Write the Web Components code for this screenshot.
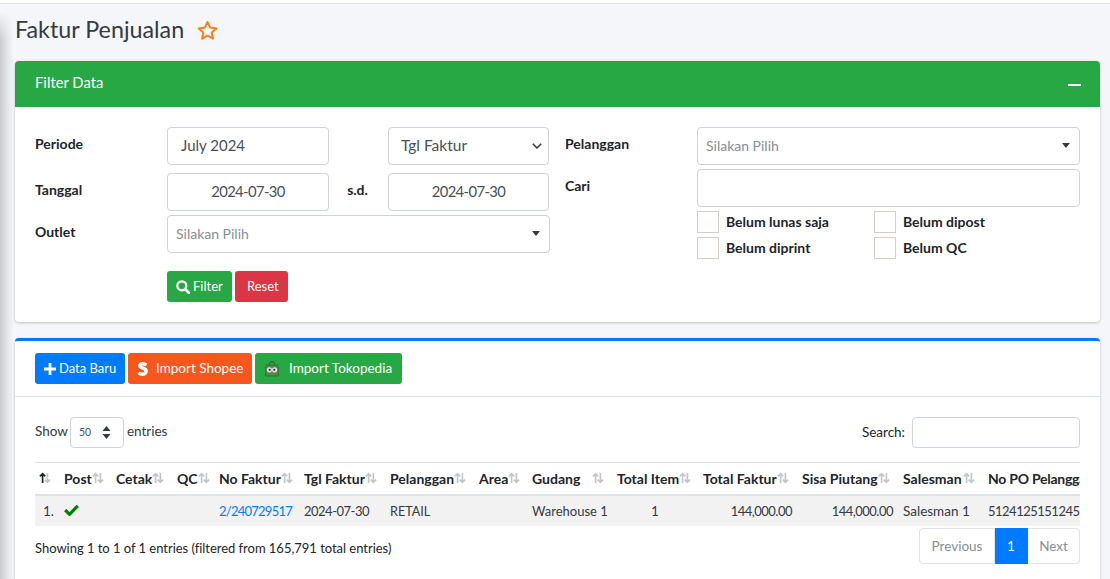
<!DOCTYPE html>
<html lang="id">
<head>
<meta charset="utf-8">
<title>Faktur Penjualan</title>
<style>
  html, body { height: 100%; }
  body {
    margin: 0;
    overflow: hidden;
    background:
      linear-gradient(180deg, #f4f6f9 12px, rgba(244,246,249,0) 40px),
      linear-gradient(90deg, #c8cacd 0, #d6d8dc 4px, #e8eaee 9px, #f4f6f9 14px) #f4f6f9;
    color: #212529;
    font: 13.5px/21px "Lato", "Noto Sans", sans-serif;
  }
</style>
</head>
<body>
<template id="tpl-page">
  <style>
    :host { display: block; padding: 0 10px 0 15px; }
    .top { height: 3px; background: #fff; border-bottom: 1px solid #dee2e6; margin: 0 -10px 0 -15px; }
    h1 { display: flex; align-items: center; gap: 13px; box-sizing: border-box; margin: 0; height: 57px; padding-bottom: 6px; font-size: 23.3px; font-weight: 400; color: #343a40; }
    svg { width: 21px; height: 21px; display: block; margin-top: 2px; }
    .stack { display: flex; flex-direction: column; gap: 16px; }
  </style>
  <div class="top"></div>
  <h1><slot name="title"></slot>
    <svg viewBox="0 0 24 24" fill="none" stroke="#fd7e14" stroke-width="2.3" stroke-linejoin="round"><path d="M12 2.2l3 6.5 7 .9-5.1 4.8 1.3 7-6.2-3.5-6.2 3.5 1.3-7L2 9.6l7-.9z"/></svg>
  </h1>
  <div class="stack"><slot></slot></div>
</template>

<template id="tpl-filter-card">
  <style>
    :host { display: block; background: #fff; border-radius: 4px; box-shadow: 0 0 1px rgba(0,0,0,.125), 0 1px 3px rgba(0,0,0,.2); }
    header { display: flex; align-items: center; justify-content: space-between; box-sizing: border-box; height: 46px; padding: 0 19px 4px 20px; background: #28a745; color: #fff; font-size: 14.8px; border-radius: 4px 4px 0 0; }
    i { display: block; width: 13px; height: 2.4px; background: #fff; margin-top: 6px; }
    .body { display: grid; grid-template-columns: 515px 515px; column-gap: 15px; padding: 20px; height: 175px; }
  </style>
  <header><slot name="title"></slot><i></i></header>
  <div class="body"><slot></slot></div>
</template>

<template id="tpl-form-field">
  <style>
    :host { display: block; }
    .row { display: grid; grid-template-columns: 132px 1fr; }
    .lbl { font-size: 14px; font-weight: 700; padding-top: 6px; color: #212529; }
  </style>
  <div class="row"><div class="lbl"><slot name="label"></slot></div><div><slot></slot></div></div>
</template>

<template id="tpl-text-box">
  <style>
    :host { display: block; box-sizing: border-box; height: 38px; border: 1px solid #ced4da; border-radius: 4px; background: #fff; color: #495057; font-size: 15px; line-height: 34px; padding: 0 13px; }
    :host([center]) { text-align: center; padding: 0; font-size: 14.8px; letter-spacing: -.6px; }
  </style>
  <slot></slot>
</template>

<template id="tpl-native-select">
  <style>
    :host { display: flex; align-items: center; justify-content: space-between; box-sizing: border-box; height: 38px; border: 1px solid #ced4da; border-radius: 4px; background: #fff; color: #495057; font-size: 15.5px; padding: 0 6px 2px 12px; }
    svg { width: 10px; height: 6px; margin-top: 2px; }
  </style>
  <slot></slot>
  <svg viewBox="0 0 10 6" fill="none" stroke="#343a40" stroke-width="1.5"><path d="M.8.8L5 5l4.2-4.2"/></svg>
</template>

<template id="tpl-select-two">
  <style>
    :host { display: flex; align-items: center; justify-content: space-between; box-sizing: border-box; height: 38px; border: 1px solid #ced4da; border-radius: 4px; background: #fff; color: #868e96; font-size: 14px; padding: 0 9px 1px 8px; }
    i { width: 0; height: 0; border: 4px solid transparent; border-top: 5px solid #343a40; border-bottom: 0; }
  </style>
  <slot></slot><i></i>
</template>

<template id="tpl-check-item">
  <style>
    :host { display: flex; align-items: center; gap: 7px; font-size: 14px; font-weight: 700; height: 22px; }
    i { box-sizing: border-box; width: 22px; height: 22px; border: 1px solid #d3cfc8; background: #fff; }
    span { display: block; margin-top: -2px; }
  </style>
  <i></i><span><slot></slot></span>
</template>

<template id="tpl-ui-button">
  <style>
    :host { display: inline-flex; align-items: center; box-sizing: border-box; height: 31px; padding: 0 0 0 9px; border-radius: 3px; color: #fff; font-size: 13.5px; white-space: nowrap; background: var(--bg, #007bff); }
    ::slotted(svg) { display: block; flex: none; }
  </style>
  <slot></slot>
</template>

<template id="tpl-list-card">
  <style>
    :host { display: block; background: #fff; border-top: 3px solid #007bff; border-radius: 4px 4px 0 0; box-shadow: 0 0 1px rgba(0,0,0,.125), 0 1px 3px rgba(0,0,0,.2); }
    .tools { display: flex; gap: 3px; padding: 12px 20px 12px; border-bottom: 1px solid #dee2e6; }
    .body { padding: 20px 20px 20px; }
  </style>
  <div class="tools"><slot name="tools"></slot></div>
  <div class="body"><slot></slot></div>
</template>

<template id="tpl-data-table">
  <style>
    :host { display: block; }
    .bar { display: flex; justify-content: space-between; align-items: center; height: 31px; }
    .len, .srch { display: flex; align-items: center; }
    .len { color: #343a40; }
    .len b { font-weight: 400; margin-top: -2px; }
    .len span.sel { display: flex; align-items: center; justify-content: space-between; box-sizing: border-box; width: 54px; height: 31px; margin: 0 3px 0 2px; padding: 0 12px 0 8px; border: 1px solid #ced4da; border-radius: 4px; font-size: 10.5px; color: #495057; }
    .srch span { margin-right: 7px; }
    .srch i { display: block; box-sizing: border-box; width: 168px; height: 31px; border: 1px solid #ced4da; border-radius: 4px; }
    .wrap { overflow: hidden; margin-top: 14px; }
    table { border-collapse: collapse; table-layout: fixed; width: 1099px; }
    th { box-sizing: border-box; height: 32px; padding: 0 9px 0 4px; text-align: left; border-top: 1px solid #dee2e6; border-bottom: 2.5px solid #dee2e6; font-size: 14px; font-weight: 700; white-space: nowrap; }
    th:last-child { letter-spacing: -.25px; }
    th div { display: flex; justify-content: space-between; align-items: center; }
    td { box-sizing: border-box; height: 31px; padding: 1px 6px 0 4px; background: #f2f2f2; white-space: nowrap; color: #343a40; }
    td.c { text-align: center; }
    td.r { text-align: right; }
    td.n { font-size: 13px; letter-spacing: -.5px; }
    td.s { font-size: 12.6px; }
    td.w { font-size: 13px; }
    a { color: #007bff; text-decoration: none; letter-spacing: -.75px; }
    th svg { flex: none; width: 12px; height: 12px; display: block; }
    td svg { margin-top: -3px; }
    .foot { display: flex; justify-content: space-between; align-items: flex-start; margin-top: 2px; }
    .info { padding-top: 10px; font-size: 13px; letter-spacing: -.03px; }
    .pager { display: flex; height: 36px; box-sizing: border-box; color: #868e96; font-size: 13.5px; }
    .pager span { display: flex; align-items: center; justify-content: center; box-sizing: border-box; padding-top: 1px; border: 1px solid #dee2e6; border-left: 0; background: #fff; }
    .pager span:first-child { width: 76px; border-left: 1px solid #dee2e6; border-radius: 4px 0 0 4px; }
    .pager span:last-child { width: 52px; border-radius: 0 4px 4px 0; }
    .pager span.on { width: 33px; background: #007bff; border-color: #007bff; color: #fff; }
  </style>
  <div class="bar">
    <div class="len"><b>Show</b> <span class="sel">50
      <svg width="9" height="13" viewBox="0 0 9 13" fill="#343a40"><path d="M4.5 0L8.5 5H.5zM4.5 13L.5 8h8z"/></svg>
    </span> <b>entries</b></div>
    <div class="srch"><span>Search:</span><i></i></div>
  </div>
  <div class="wrap"><table>
    <colgroup id="cols"></colgroup>
    <thead><tr id="head"></tr></thead>
    <tbody><tr id="row"></tr></tbody>
  </table></div>
  <div class="foot">
    <div class="info">Showing 1 to 1 of 1 entries (filtered from 165,791 total entries)</div>
    <div class="pager"><span>Previous</span><span class="on">1</span><span>Next</span></div>
  </div>
</template>

<script>
function tpl(id) { return document.getElementById(id).content.cloneNode(true) }

// simple elements: only a template and a shadow root
const simple = {
  'app-page': 'tpl-page',
  'filter-card': 'tpl-filter-card',
  'form-field': 'tpl-form-field',
  'text-box': 'tpl-text-box',
  'native-select': 'tpl-native-select',
  'select-two': 'tpl-select-two',
  'check-item': 'tpl-check-item',
  'ui-button': 'tpl-ui-button',
  'list-card': 'tpl-list-card'
}
Object.keys(simple).forEach(tag => {
  customElements.define(tag, class extends HTMLElement {
    constructor() {
      super()
      this.attachShadow({mode: 'open'}).appendChild(tpl(simple[tag]))
    }
  })
})

// TABLE ___________________________________________________
const COLS = [
  ['', 25], ['Post', 52], ['Cetak', 61], ['QC', 42], ['No Faktur', 85], ['Tgl Faktur', 86],
  ['Pelanggan', 89], ['Area', 53], ['Gudang', 85], ['Total Item', 86], ['Total Faktur', 99],
  ['Sisa Piutang', 101], ['Salesman', 85], ['No PO Pelanggan', 150]
]
const ROW = [
  ['1.', 'r'], ['check'], [''], [''], ['link', 'n'], ['2024-07-30', 'n'], ['RETAIL', 's'], [''], ['Warehouse 1', 'w'],
  ['1', 'c'], ['144,000.00', 'r n'], ['144,000.00', 'r n'], ['Salesman 1'], ['5124125151245', 'n']
]
const sortIcon = first => `<svg viewBox="0 0 12 12" fill="none" stroke-width="1.7">
  <path d="M3.6 11V1.6M.9 4.4l2.7-2.8 2.7 2.8" stroke="${first ? '#212529' : '#c4c6c8'}"/>
  <path d="M8.4 1v9.4M5.7 7.6l2.7 2.8 2.7-2.8" stroke="#c4c6c8"/></svg>`

class DataTable extends HTMLElement {
  constructor() {
    super()
    this.attachShadow({mode: 'open'}).appendChild(tpl('tpl-data-table'))
  }
  connectedCallback() {
    const root = this.shadowRoot
    root.getElementById('cols').innerHTML = COLS.map(c => `<col style="width:${c[1]}px">`).join('')
    root.getElementById('head').innerHTML = COLS.map((c, i) =>
      `<th><div><span>${c[0]}</span>${i < 13 ? sortIcon(i === 0) : ''}</div></th>`).join('')
    root.getElementById('row').innerHTML = ROW.map(c => {
      let html = c[0]
      if (html === 'check') html = '<svg width="15" height="12" viewBox="0 0 15 12" style="display:block"><path d="M1.2 6l4.3 4.3L13.8 1.8" fill="none" stroke="#008000" stroke-width="3.2"/></svg>'
      if (html === 'link') html = '<a>2/240729517</a>'
      return `<td class="${c[1] || ''}">${html}</td>`
    }).join('')
  }
}
customElements.define('data-table', DataTable)
</script>

<style>
  .grid { display: grid; grid-template-columns: 162px 59px 161px; align-items: start; }
  .sd { font-size: 14px; font-weight: 700; text-align: center; padding: 6px 2px 0 0; }
  .col { display: flex; flex-direction: column; }
  .checks { display: grid; grid-template-columns: 177px 1fr; gap: 4px 0; }
  .btns { display: flex; gap: 3px; margin: 18px 0 0 132px; }
  .icon-gap { margin-right: 3px; }
</style>

<app-page>
  <span slot="title">Faktur Penjualan</span>

  <filter-card>
    <span slot="title">Filter Data</span>
    <div class="col">
      <form-field>
        <span slot="label">Periode</span>
        <div class="grid">
          <text-box>July 2024</text-box><span></span><native-select>Tgl Faktur</native-select>
        </div>
      </form-field>
      <form-field style="margin-top:8px">
        <span slot="label">Tanggal</span>
        <div class="grid">
          <text-box center>2024-07-30</text-box><span class="sd">s.d.</span><text-box center>2024-07-30</text-box>
        </div>
      </form-field>
      <form-field style="margin-top:4px">
        <span slot="label">Outlet</span>
        <select-two>Silakan Pilih</select-two>
      </form-field>
      <div class="btns">
        <ui-button style="--bg:#28a745;width:65px;font-size:13px">
          <svg class="icon-gap" width="14" height="14" viewBox="0 0 14 14" fill="none" stroke="#fff" stroke-width="2.2"><circle cx="5.8" cy="5.8" r="4.5"/><path d="M9 9l4 4" stroke-linecap="round" stroke-width="2.6"/></svg>Filter
        </ui-button>
        <ui-button style="--bg:#dc3545;padding:0 0 0 12px;width:53px;font-size:13px">Reset</ui-button>
      </div>
    </div>
    <div class="col">
      <form-field>
        <span slot="label">Pelanggan</span>
        <select-two>Silakan Pilih</select-two>
      </form-field>
      <form-field style="margin-top:4px">
        <span slot="label">Cari</span>
        <text-box></text-box>
      </form-field>
      <form-field style="margin-top:4px">
        <span slot="label"></span>
        <div class="checks">
          <check-item>Belum lunas saja</check-item><check-item>Belum dipost</check-item>
          <check-item>Belum diprint</check-item><check-item>Belum QC</check-item>
        </div>
      </form-field>
    </div>
  </filter-card>

  <list-card>
    <ui-button slot="tools" style="width:90px;font-size:13px">
      <svg class="icon-gap" width="12" height="12" viewBox="0 0 12 12" fill="#fff"><path d="M4.6 0h2.8v4.6H12v2.8H7.4V12H4.6V7.4H0V4.6h4.6z"/></svg>Data Baru
    </ui-button>
    <ui-button slot="tools" style="--bg:#f7561d;width:124px">
      <svg width="11" height="14" viewBox="0 0 12 16" style="margin-right:8px"><path d="M10.4 3.4C9 2.4 7.6 2 6.2 2 4.2 2 3 3 3 4.4c0 3 7.2 1.9 7.2 6.3C10.200 12.600 8.400 14 5.800 14 4.200 14 2.800 13.500 1.400 12.500" fill="none" stroke="#fff" stroke-width="4"/></svg>Import Shopee
    </ui-button>
    <ui-button slot="tools" style="--bg:#28a745;width:147px;padding:0 0 0 10px">
      <svg width="14" height="16" viewBox="0 0 16 17" style="margin-right:10px">
        <path d="M5 4V2.2A3 2 0 0 1 11 2.2V4" fill="none" stroke="#2f5a30" stroke-width="1.1"/>
        <path d="M1 4h14l.5 12.500H.6z" fill="#4f8a44" stroke="#2f5a30" stroke-width=".7"/>
        <circle cx="5" cy="9.400" r="3" fill="#e2e2e2"/><circle cx="11" cy="9.400" r="3" fill="#e2e2e2"/>
        <circle cx="5.400" cy="9.400" r="1.300" fill="#333"/><circle cx="10.600" cy="9.400" r="1.300" fill="#333"/>
        <path d="M7 11.600h2L8 13.200z" fill="#e8a33a"/>
      </svg>Import Tokopedia
    </ui-button>
    <data-table></data-table>
  </list-card>
</app-page>
</body>
</html>
